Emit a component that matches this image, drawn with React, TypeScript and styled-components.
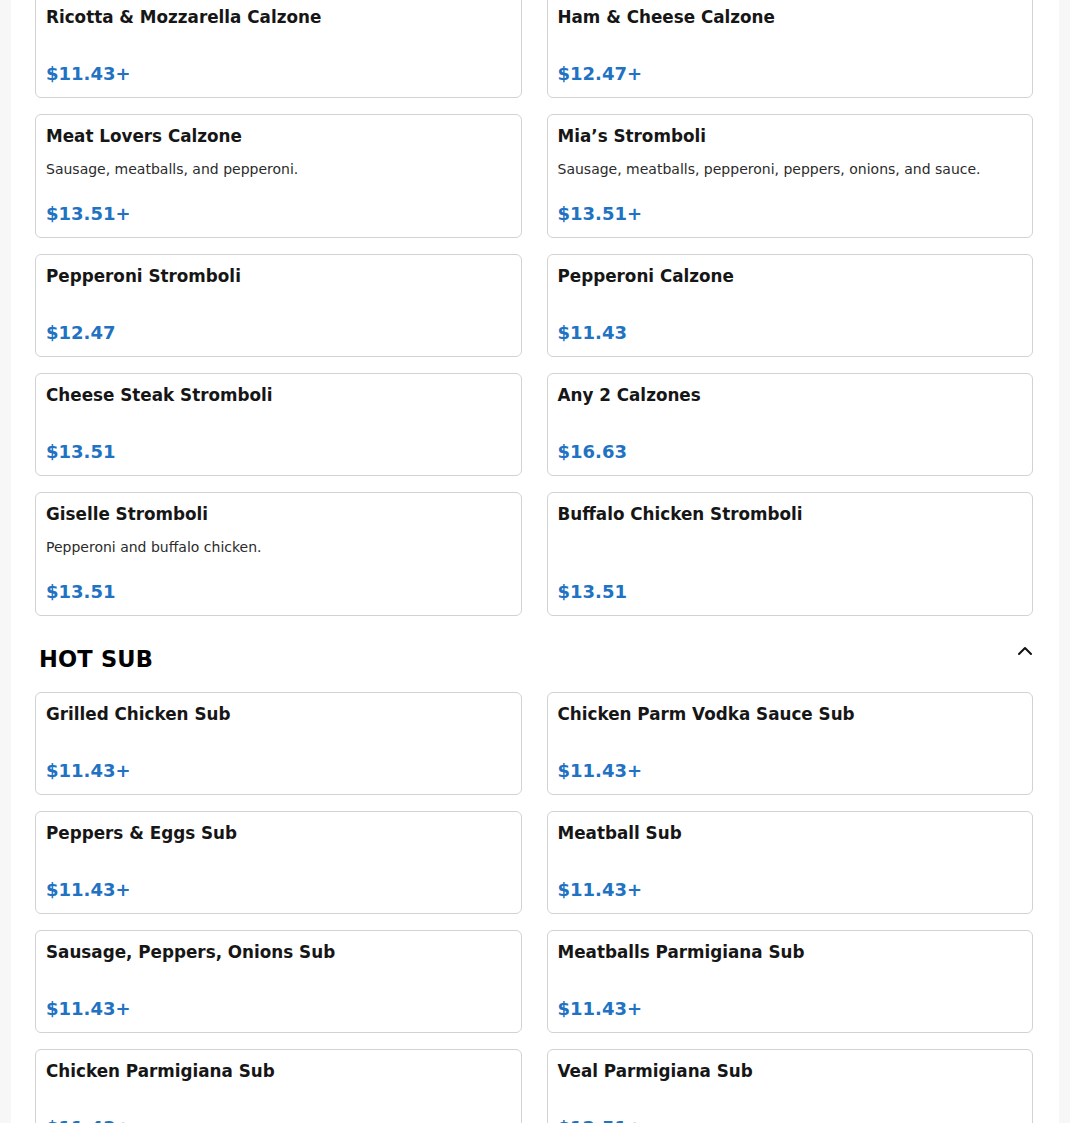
import React from 'react';
import styled, { createGlobalStyle } from 'styled-components';
import { ChevronUp } from 'lucide-react';

type Item = { name: string; desc?: string; price: string };
type Section = { title?: string; items: Item[] };

const sections: Section[] = [
    {
        items: [
            { name: 'Ricotta & Mozzarella Calzone', price: '$11.43+' },
            { name: 'Ham & Cheese Calzone', price: '$12.47+' },
            { name: 'Meat Lovers Calzone', desc: 'Sausage, meatballs, and pepperoni.', price: '$13.51+' },
            {
                name: 'Mia’s Stromboli',
                desc: 'Sausage, meatballs, pepperoni, peppers, onions, and sauce.',
                price: '$13.51+'
            },
            { name: 'Pepperoni Stromboli', price: '$12.47' },
            { name: 'Pepperoni Calzone', price: '$11.43' },
            { name: 'Cheese Steak Stromboli', price: '$13.51' },
            { name: 'Any 2 Calzones', price: '$16.63' },
            { name: 'Giselle Stromboli', desc: 'Pepperoni and buffalo chicken.', price: '$13.51' },
            { name: 'Buffalo Chicken Stromboli', price: '$13.51' }
        ]
    },
    {
        title: 'HOT SUB',
        items: [
            { name: 'Grilled Chicken Sub', price: '$11.43+' },
            { name: 'Chicken Parm Vodka Sauce Sub', price: '$11.43+' },
            { name: 'Peppers & Eggs Sub', price: '$11.43+' },
            { name: 'Meatball Sub', price: '$11.43+' },
            { name: 'Sausage, Peppers, Onions Sub', price: '$11.43+' },
            { name: 'Meatballs Parmigiana Sub', price: '$11.43+' },
            { name: 'Chicken Parmigiana Sub', price: '$11.43+' },
            { name: 'Veal Parmigiana Sub', price: '$12.51+' }
        ]
    }
];

const GlobalStyle = createGlobalStyle`
    html, body {
        margin: 0;
        padding: 0;
        background: #f7f7f7;
        font-family: "DejaVu Sans", Verdana, sans-serif;
        overflow: hidden;
    }
`;

const Page = styled.div`
    width: 1048px;
    margin: 0 11px;
    background: #fff;
    min-height: 1123px;
`;

const Menu = styled.main`
    padding: 0 26px 40px 24px;
    margin-top: -5px;
`;

const SectionHeader = styled.div`
    display: flex;
    align-items: center;
    justify-content: space-between;
    margin: 28px -4px 18px 4px;
    height: 30px;
`;

const SectionTitle = styled.h2`
    margin: 0;
    font-size: 22.5px;
    font-weight: 700;
    color: #000;
    letter-spacing: 0.2px;
`;

const ToggleButton = styled.button`
    display: flex;
    align-items: center;
    justify-content: center;
    width: 24px;
    height: 24px;
    padding: 0;
    margin-top: -16px;
    border: none;
    background: none;
    color: #111;
`;

const Grid = styled.div`
    display: grid;
    grid-template-columns: 1fr 1fr;
    column-gap: 25px;
    row-gap: 16px;
`;

const Card = styled.div`
    display: flex;
    flex-direction: column;
    border: 1px solid #d2d2d2;
    border-radius: 6px;
    padding: 10px;
    min-height: 81px;
`;

const Name = styled.h3`
    margin: 0;
    font-size: 16.8px;
    line-height: 22px;
    font-weight: 700;
    color: #161616;
`;

const Desc = styled.p`
    margin: 12px 0 0;
    font-size: 14px;
    line-height: 21px;
    color: #2b2b2b;
`;

const Price = styled.div`
    margin-top: auto;
    padding-top: 20px;
    font-size: 18px;
    line-height: 27px;
    font-weight: 700;
    color: #2272c3;
`;

function MenuCard({ item }: { item: Item }) {
    return (
        <Card>
            <Name>{item.name}</Name>
            {item.desc && <Desc>{item.desc}</Desc>}
            <Price>{item.price}</Price>
        </Card>
    );
}

export default function App() {
    return (
        <>
            <GlobalStyle />
            <Page>
                <Menu>
                    {sections.map((section, i) => (
                        <section key={i}>
                            {section.title && (
                                <SectionHeader>
                                    <SectionTitle>{section.title}</SectionTitle>
                                    <ToggleButton aria-label="Collapse">
                                        <ChevronUp size={24} strokeWidth={2} />
                                    </ToggleButton>
                                </SectionHeader>
                            )}
                            <Grid>
                                {section.items.map(item => (
                                    <MenuCard key={item.name} item={item} />
                                ))}
                            </Grid>
                        </section>
                    ))}
                </Menu>
            </Page>
        </>
    );
}
